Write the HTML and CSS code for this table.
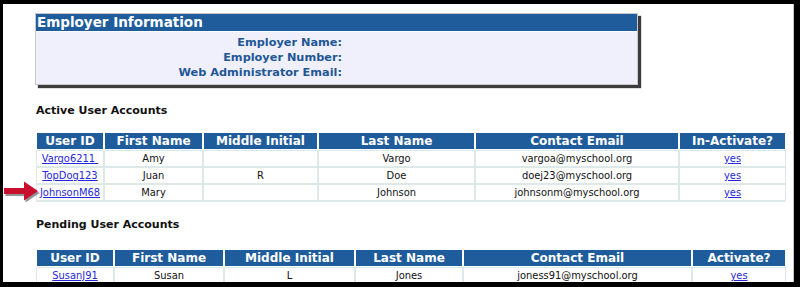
FILE: index.html
```html
<!DOCTYPE html>
<html>
<head>
<meta charset="utf-8">
<link rel="stylesheet" href="styles.css">
</head>
<body>
<div class="frame">
  <div class="page">
    <div class="emp-box">
      <div class="emp-title">Employer Information</div>
      <div class="emp-body">
        <div class="emp-row"><span class="emp-label">Employer Name:</span><span class="emp-val"></span></div>
        <div class="emp-row"><span class="emp-label">Employer Number:</span><span class="emp-val"></span></div>
        <div class="emp-row"><span class="emp-label">Web Administrator Email:</span><span class="emp-val"></span></div>
      </div>
    </div>

    <h2 class="section-title first">Active User Accounts</h2>
    <table class="grid">
      <colgroup>
        <col class="a1"><col class="a2"><col class="a3"><col class="a4"><col class="a5"><col class="a6">
      </colgroup>
      <thead>
        <tr><th>User ID</th><th>First Name</th><th>Middle Initial</th><th>Last Name</th><th>Contact Email</th><th>In-Activate?</th></tr>
      </thead>
      <tbody>
        <tr><td><a href="#">Vargo6211&nbsp;</a></td><td>Amy</td><td></td><td>Vargo</td><td>vargoa@myschool.org</td><td><a href="#">yes</a></td></tr>
        <tr><td><a href="#">TopDog123</a></td><td>Juan</td><td>R</td><td>Doe</td><td>doej23@myschool.org</td><td><a href="#">yes</a></td></tr>
        <tr><td><a href="#">JohnsonM68</a></td><td>Mary</td><td></td><td>Johnson</td><td>johnsonm@myschool.org</td><td><a href="#">yes</a></td></tr>
        <tr class="empty"><td></td><td></td><td></td><td></td><td></td><td></td></tr>
      </tbody>
    </table>

    <h2 class="section-title second">Pending User Accounts</h2>
    <table class="grid">
      <colgroup>
        <col class="p1"><col class="p2"><col class="p3"><col class="p4"><col class="p5"><col class="p6">
      </colgroup>
      <thead>
        <tr><th>User ID</th><th>First Name</th><th>Middle Initial</th><th>Last Name</th><th>Contact Email</th><th>Activate?</th></tr>
      </thead>
      <tbody>
        <tr><td><a href="#">SusanJ91</a></td><td>Susan</td><td>L</td><td>Jones</td><td>joness91@myschool.org</td><td><a href="#">yes</a></td></tr>
      </tbody>
    </table>
  </div>

  <svg class="arrow" width="40" height="22" viewBox="0 0 40 22">
    <polygon points="1,7 21,7 21,0.5 35,10 21,19.5 21,13 1,13" fill="#3a3a3a" opacity="0.55" transform="translate(1.5,2)"/>
    <polygon points="1,7 21,7 21,0.5 35,10 21,19.5 21,13 1,13" fill="#c8102e"/>
  </svg>
</div>
</body>
</html>
```

FILE: styles.css
```css
html, body {
  margin: 0;
  padding: 0;
  background: #000;
}

.frame {
  position: relative;
  width: 800px;
  height: 287px;
  box-sizing: border-box;
  border-style: solid;
  border-color: #000;
  border-width: 4px 6px 5px 3px;
  background: #fff;
  overflow: hidden;
  font-family: "DejaVu Sans", Verdana, sans-serif;
}

.page {
  height: 100%;
  box-sizing: border-box;
  padding: 9px 0 0 32px;
  border-right: 1px solid #c8c8c8;
}

.emp-box {
  width: 601px;
  border: 1px solid #c8c8c8;
  background: #f0f0fc;
  box-shadow: 3px 3px 1px #3c3c3c;
}

.emp-title {
  background: #1f5c9c;
  color: #fff;
  font-weight: bold;
  font-size: 13.5px;
  line-height: 17px;
  padding-left: 1px;
  border-bottom: 1px solid #fff;
}

.emp-body {
  padding: 3px 0 4px 0;
}

.emp-row {
  display: flex;
  height: 15px;
  line-height: 15px;
}

.emp-label {
  width: 306px;
  text-align: right;
  color: #1f5794;
  font-weight: bold;
  font-size: 11.3px;
}

.section-title {
  margin: 0;
  font-size: 11px;
  font-weight: bold;
  color: #111;
  line-height: 14px;
  padding-left: 1px;
}

.section-title.first {
  margin-top: 19px;
  margin-bottom: 14px;
}

.section-title.second {
  margin-top: 16px;
  margin-bottom: 17px;
}

.grid {
  width: 750px;
  table-layout: fixed;
  border-collapse: separate;
  border-spacing: 0;
  margin-left: 1px;
}

.grid th {
  background: #1f5c9c;
  color: #fff;
  font-weight: bold;
  font-size: 12px;
  height: 16px;
  padding: 0;
  line-height: 14px;
  border: 1px solid #fff;
  text-align: center;
  white-space: nowrap;
}

.grid td {
  height: 15px;
  padding: 0;
  line-height: 15px;
  border: 1px solid #dde8e8;
  text-align: center;
  color: #111;
  white-space: nowrap;
  font-family: "DejaVu Sans Condensed", "DejaVu Sans", sans-serif;
  font-stretch: condensed;
  font-size: 11px;
}

.grid tr.empty td {
  height: 0;
  line-height: 0;
  border-bottom: none;
}

.grid a {
  color: #2626dc;
  text-decoration: underline;
}

.a1 { width: 68px; }
.a2 { width: 99px; }
.a3 { width: 115px; }
.a4 { width: 157px; }
.a5 { width: 204px; }
.a6 { width: 107px; }

.p1 { width: 78px; }
.p2 { width: 110px; }
.p3 { width: 131px; }
.p4 { width: 108px; }
.p5 { width: 229px; }
.p6 { width: 94px; }

.arrow {
  position: absolute;
  left: 0;
  top: 177px;
}
```
